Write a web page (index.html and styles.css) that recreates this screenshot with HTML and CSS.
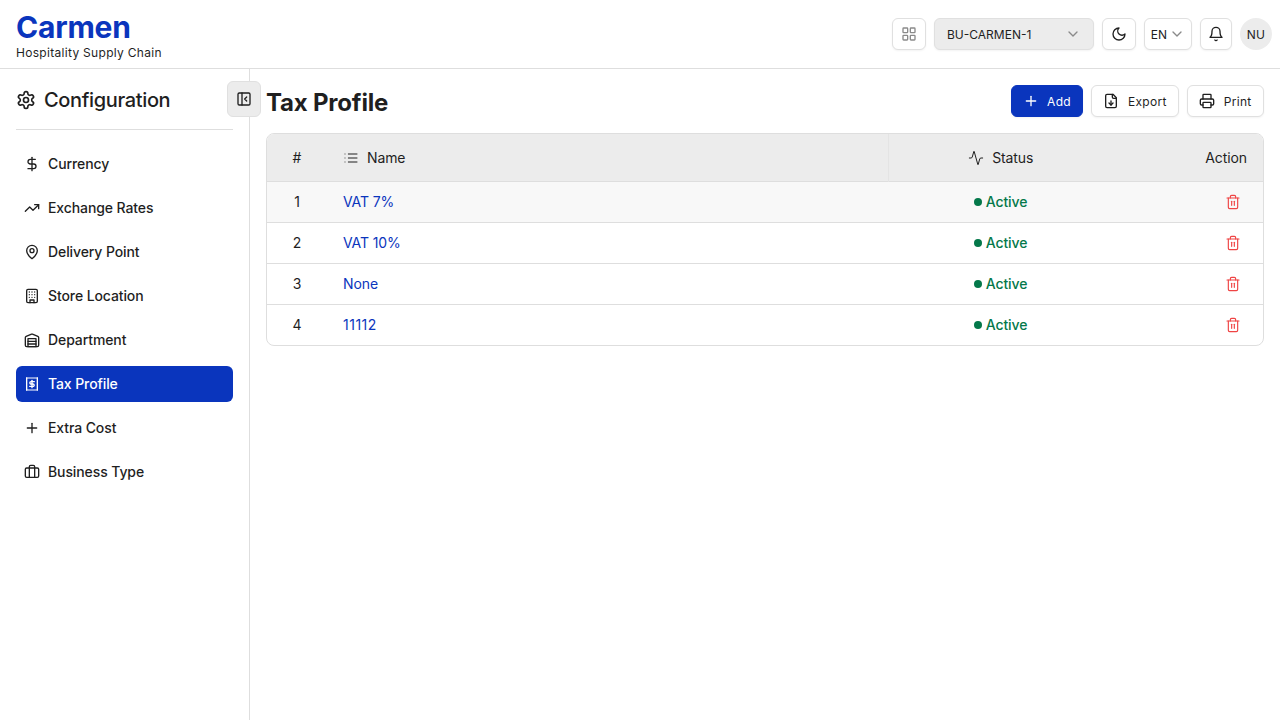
FILE: index.html
```html
<!DOCTYPE html>
<html lang="en">

<head>
    <meta charset="UTF-8">
    <meta name="viewport" content="width=device-width, initial-scale=1.0">
    <title>Tax Profile - Carmen</title>
    <link rel="stylesheet" href="styles.css">
</head>

<body>
    <svg class="sprite" aria-hidden="true">
        <symbol id="i-chevron" viewBox="0 0 24 24"><path d="m6 9 6 6 6-6"/></symbol>
        <symbol id="i-plus" viewBox="0 0 24 24"><path d="M5 12h14"/><path d="M12 5v14"/></symbol>
        <symbol id="i-trash" viewBox="0 0 24 24"><path d="M3 6h18"/><path d="M19 6v14c0 1-1 2-2 2H7c-1 0-2-1-2-2V6"/><path d="M8 6V4c0-1 1-2 2-2h4c1 0 2 1 2 2v2"/><path d="M10 11v6"/><path d="M14 11v6"/></symbol>
    </svg>

    <header class="topbar">
        <div class="brand">
            <div class="brand-name">Carmen</div>
            <div class="brand-sub">Hospitality Supply Chain</div>
        </div>
        <div class="top-actions">
            <button class="btn-box btn-grid" type="button">
                <svg class="icon muted" viewBox="0 0 24 24"><rect width="7" height="7" x="3" y="3" rx="1"/><rect width="7" height="7" x="14" y="3" rx="1"/><rect width="7" height="7" x="14" y="14" rx="1"/><rect width="7" height="7" x="3" y="14" rx="1"/></svg>
            </button>
            <button class="bu-select" type="button">
                <span>BU-CARMEN-1</span>
                <svg class="icon muted"><use href="#i-chevron"/></svg>
            </button>
            <button class="btn-box btn-moon" type="button">
                <svg class="icon" viewBox="0 0 24 24"><path d="M12 3a6 6 0 0 0 9 9 9 9 0 1 1-9-9Z"/></svg>
            </button>
            <button class="btn-box btn-lang" type="button">
                <span>EN</span>
                <svg class="icon muted"><use href="#i-chevron"/></svg>
            </button>
            <button class="btn-box btn-bell" type="button">
                <svg class="icon" viewBox="0 0 24 24"><path d="M6 8a6 6 0 0 1 12 0c0 7 3 9 3 9H3s3-2 3-9"/><path d="M10.3 21a1.94 1.94 0 0 0 3.4 0"/></svg>
            </button>
            <div class="avatar">NU</div>
        </div>
    </header>

    <div class="layout">
        <aside class="sidebar">
            <div class="side-title">
                <svg class="icon icon-lg" viewBox="0 0 24 24"><path d="M12.22 2h-.44a2 2 0 0 0-2 2v.18a2 2 0 0 1-1 1.73l-.43.25a2 2 0 0 1-2 0l-.15-.08a2 2 0 0 0-2.73.73l-.22.38a2 2 0 0 0 .73 2.73l.15.1a2 2 0 0 1 1 1.72v.51a2 2 0 0 1-1 1.74l-.15.09a2 2 0 0 0-.73 2.73l.22.38a2 2 0 0 0 2.73.73l.15-.08a2 2 0 0 1 2 0l.43.25a2 2 0 0 1 1 1.73V20a2 2 0 0 0 2 2h.44a2 2 0 0 0 2-2v-.18a2 2 0 0 1 1-1.73l.43-.25a2 2 0 0 1 2 0l.15.08a2 2 0 0 0 2.73-.73l.22-.39a2 2 0 0 0-.73-2.73l-.15-.08a2 2 0 0 1-1-1.74v-.5a2 2 0 0 1 1-1.74l.15-.09a2 2 0 0 0 .73-2.73l-.22-.38a2 2 0 0 0-2.73-.73l-.15.08a2 2 0 0 1-2 0l-.43-.25a2 2 0 0 1-1-1.73V4a2 2 0 0 0-2-2z"/><circle cx="12" cy="12" r="3"/></svg>
                <span>Configuration</span>
            </div>
            <button class="collapse-btn" type="button">
                <svg class="icon" viewBox="0 0 24 24"><rect width="18" height="18" x="3" y="3" rx="2"/><path d="M9 3v18"/><path d="m16 15-3-3 3-3"/></svg>
            </button>
            <nav class="side-nav">
                <a class="nav-item" href="#">
                    <svg class="icon" viewBox="0 0 24 24"><path d="M12 2v20"/><path d="M17 5H9.5a3.5 3.5 0 0 0 0 7h5a3.5 3.5 0 0 1 0 7H6"/></svg>
                    Currency
                </a>
                <a class="nav-item" href="#">
                    <svg class="icon" viewBox="0 0 24 24"><path d="M22 7 13.5 15.5 8.5 10.5 2 17"/><path d="M16 7h6v6"/></svg>
                    Exchange Rates
                </a>
                <a class="nav-item" href="#">
                    <svg class="icon" viewBox="0 0 24 24"><path d="M20 10c0 6-8 12-8 12s-8-6-8-12a8 8 0 0 1 16 0Z"/><circle cx="12" cy="10" r="3"/></svg>
                    Delivery Point
                </a>
                <a class="nav-item" href="#">
                    <svg class="icon" viewBox="0 0 24 24"><rect width="16" height="20" x="4" y="2" rx="2"/><path d="M9 22v-4h6v4"/><path d="M8 6h.01"/><path d="M16 6h.01"/><path d="M12 6h.01"/><path d="M12 10h.01"/><path d="M12 14h.01"/><path d="M16 10h.01"/><path d="M16 14h.01"/><path d="M8 10h.01"/><path d="M8 14h.01"/></svg>
                    Store Location
                </a>
                <a class="nav-item" href="#">
                    <svg class="icon" viewBox="0 0 24 24"><path d="M22 8.35V20a2 2 0 0 1-2 2H4a2 2 0 0 1-2-2V8.35A2 2 0 0 1 3.26 6.5l8-3.2a2 2 0 0 1 1.48 0l8 3.2A2 2 0 0 1 22 8.35Z"/><path d="M6 18h12"/><path d="M6 14h12"/><rect width="12" height="12" x="6" y="10"/></svg>
                    Department
                </a>
                <a class="nav-item active" href="#">
                    <svg class="icon" viewBox="0 0 24 24"><path d="M3.5 3h17M3.5 21h17" stroke-linecap="butt" stroke-dasharray="2 1"/><path d="M4 3v18M20 3v18"/><path d="M15.5 8.5h-5a1.75 1.75 0 0 0 0 3.5h3a1.75 1.75 0 0 1 0 3.5h-5"/><path d="M12 6.5v11"/></svg>
                    Tax Profile
                </a>
                <a class="nav-item" href="#">
                    <svg class="icon"><use href="#i-plus"/></svg>
                    Extra Cost
                </a>
                <a class="nav-item" href="#">
                    <svg class="icon" viewBox="0 0 24 24"><path d="M16 20V4a2 2 0 0 0-2-2h-4a2 2 0 0 0-2 2v16"/><rect width="20" height="14" x="2" y="6" rx="2"/></svg>
                    Business Type
                </a>
            </nav>
        </aside>

        <main class="content">
            <div class="page-head">
                <h1>Tax Profile</h1>
                <div class="page-actions">
                    <button class="btn btn-primary" type="button">
                        <svg class="icon"><use href="#i-plus"/></svg>
                        Add
                    </button>
                    <button class="btn" type="button">
                        <svg class="icon" viewBox="0 0 24 24"><path d="M15 2H6a2 2 0 0 0-2 2v16a2 2 0 0 0 2 2h12a2 2 0 0 0 2-2V7Z"/><path d="M14 2v4a2 2 0 0 0 2 2h4"/><path d="M12 18v-6"/><path d="m9 15 3 3 3-3"/></svg>
                        Export
                    </button>
                    <button class="btn" type="button">
                        <svg class="icon" viewBox="0 0 24 24"><path d="M6 18H4a2 2 0 0 1-2-2v-5a2 2 0 0 1 2-2h16a2 2 0 0 1 2 2v5a2 2 0 0 1-2 2h-2"/><path d="M6 9V3a1 1 0 0 1 1-1h10a1 1 0 0 1 1 1v6"/><rect x="6" y="14" width="12" height="8" rx="1"/></svg>
                        Print
                    </button>
                </div>
            </div>

            <div class="table-wrap">
                <table class="data-table">
                    <thead>
                        <tr>
                            <th class="col-num">#</th>
                            <th class="col-name">
                                <span class="th-label">
                                    <svg class="icon" viewBox="0 0 24 24"><path d="M3 12h.01"/><path d="M3 18h.01"/><path d="M3 6h.01"/><path d="M8 12h13"/><path d="M8 18h13"/><path d="M8 6h13"/></svg>
                                    Name
                                </span>
                            </th>
                            <th class="col-status">
                                <span class="th-label">
                                    <svg class="icon" viewBox="0 0 24 24"><path d="M22 12h-2.48a2 2 0 0 0-1.93 1.46l-2.35 8.36a.25.25 0 0 1-.48 0L9.24 2.18a.25.25 0 0 0-.48 0l-2.35 8.36A2 2 0 0 1 4.49 12H2"/></svg>
                                    Status
                                </span>
                            </th>
                            <th class="col-action">Action</th>
                        </tr>
                    </thead>
                    <tbody>
                        <tr class="row-hover">
                            <td class="col-num">1</td>
                            <td><a class="row-link" href="#">VAT 7%</a></td>
                            <td class="col-status"><span class="status"><i class="dot"></i>Active</span></td>
                            <td class="col-action"><svg class="icon trash"><use href="#i-trash"/></svg></td>
                        </tr>
                        <tr>
                            <td class="col-num">2</td>
                            <td><a class="row-link" href="#">VAT 10%</a></td>
                            <td class="col-status"><span class="status"><i class="dot"></i>Active</span></td>
                            <td class="col-action"><svg class="icon trash"><use href="#i-trash"/></svg></td>
                        </tr>
                        <tr>
                            <td class="col-num">3</td>
                            <td><a class="row-link" href="#">None</a></td>
                            <td class="col-status"><span class="status"><i class="dot"></i>Active</span></td>
                            <td class="col-action"><svg class="icon trash"><use href="#i-trash"/></svg></td>
                        </tr>
                        <tr>
                            <td class="col-num">4</td>
                            <td><a class="row-link row-code" href="#">11112</a></td>
                            <td class="col-status"><span class="status"><i class="dot"></i>Active</span></td>
                            <td class="col-action"><svg class="icon trash"><use href="#i-trash"/></svg></td>
                        </tr>
                    </tbody>
                </table>
            </div>
        </main>
    </div>
</body>

</html>
```

FILE: styles.css
```css
* {
    box-sizing: border-box;
}

body {
    font-family: Inter, "Liberation Sans", sans-serif;
    background-color: #fff;
    color: #1f1f1f;
    margin: 0;
    height: 100vh;
    display: flex;
    flex-direction: column;
    overflow: hidden;
}

button {
    font-family: inherit;
    color: inherit;
    cursor: pointer;
}

a {
    color: inherit;
    text-decoration: none;
}

.sprite {
    display: none;
}

.icon {
    width: 16px;
    height: 16px;
    flex-shrink: 0;
    fill: none;
    stroke: currentColor;
    stroke-width: 2;
    stroke-linecap: round;
    stroke-linejoin: round;
}

.icon-lg {
    width: 20px;
    height: 20px;
}

.muted {
    color: #8a8a8a;
}

/* top bar */
.topbar {
    height: 69px;
    flex-shrink: 0;
    display: flex;
    justify-content: space-between;
    align-items: center;
    padding: 0 8px 0 16px;
    border-bottom: 1px solid #dedede;
}

.brand {
    padding-top: 2px;
}

.brand-name {
    font-size: 30px;
    line-height: 36px;
    font-weight: 700;
    letter-spacing: -0.2px;
    color: #0a35bd;
}

.brand-sub {
    font-size: 12px;
    line-height: 16px;
    letter-spacing: 0.3px;
}

.top-actions {
    display: flex;
    align-items: center;
    gap: 8px;
}

.btn-box {
    height: 32px;
    display: flex;
    align-items: center;
    justify-content: center;
    gap: 2px;
    padding: 0;
    background: #fff;
    border: 1px solid #e0e0e0;
    border-radius: 6px;
    box-shadow: 0 1px 2px rgba(0, 0, 0, 0.05);
    font-size: 12px;
}

.btn-grid,
.btn-moon {
    width: 34px;
}

.btn-lang {
    width: 48px;
}

.btn-bell {
    width: 32px;
}

.bu-select {
    width: 160px;
    height: 32px;
    display: flex;
    align-items: center;
    justify-content: space-between;
    padding: 0 12px;
    background: #ececec;
    border: 1px solid #e0e0e0;
    border-radius: 6px;
    box-shadow: 0 1px 2px rgba(0, 0, 0, 0.05);
    font-size: 12px;
}

.avatar {
    width: 32px;
    height: 32px;
    display: flex;
    align-items: center;
    justify-content: center;
    border-radius: 50%;
    background: #ececec;
    font-size: 12px;
    font-weight: 400;
    letter-spacing: 0.3px;
}

/* page layout */
.layout {
    flex: 1;
    display: flex;
    min-height: 0;
}

.sidebar {
    position: relative;
    width: 250px;
    flex-shrink: 0;
    padding: 12px 16px;
    border-right: 1px solid #dedede;
}

.side-title {
    height: 49px;
    display: flex;
    align-items: center;
    gap: 8px;
    padding-bottom: 10px;
    border-bottom: 1px solid #dedede;
    margin-bottom: 16px;
    font-size: 20px;
    font-weight: 500;
    letter-spacing: -0.35px;
}

.collapse-btn {
    position: absolute;
    top: 12px;
    left: 227px;
    width: 34px;
    height: 36px;
    display: flex;
    align-items: center;
    justify-content: center;
    padding: 0;
    background: #ececec;
    border: 1px solid #e0e0e0;
    border-radius: 6px;
}

.side-nav {
    display: flex;
    flex-direction: column;
    gap: 8px;
}

.nav-item {
    height: 36px;
    display: flex;
    align-items: center;
    gap: 8px;
    padding: 0 8px 1px;
    border-radius: 6px;
    font-size: 14px;
    font-weight: 500;
    letter-spacing: -0.1px;
}

.nav-item.active {
    background: #0a35bd;
    color: #fff;
}

/* main content */
.content {
    flex: 1;
    min-width: 0;
    padding: 16px;
}

.page-head {
    display: flex;
    justify-content: space-between;
    align-items: center;
    height: 32px;
    margin-bottom: 16px;
}

h1 {
    margin: 0;
    padding-top: 2px;
    font-size: 24px;
    font-weight: 700;
    letter-spacing: -0.2px;
}

.page-actions {
    display: flex;
    gap: 8px;
}

.btn {
    height: 32px;
    display: flex;
    align-items: center;
    gap: 8.5px;
    padding: 0 11.5px 0 11px;
    background: #fff;
    border: 1px solid #e0e0e0;
    border-radius: 6px;
    box-shadow: 0 1px 2px rgba(0, 0, 0, 0.05);
    font-size: 12px;
    font-weight: 400;
    letter-spacing: 0.3px;
}

.btn-primary {
    background: #0a35bd;
    border-color: #0a35bd;
    color: #fff;
}

.table-wrap {
    border: 1px solid #dedede;
    border-radius: 8px;
    overflow: hidden;
}

.data-table {
    width: 100%;
    border-collapse: collapse;
    table-layout: fixed;
    font-size: 14px;
    letter-spacing: -0.1px;
}

.data-table th {
    height: 47px;
    padding: 1px 0 0;
    background: #ececec;
    font-weight: 400;
    text-align: left;
}

.data-table td {
    height: 41px;
    border-top: 1px solid #dedede;
    padding: 0;
}

.col-num {
    width: 60px;
    text-align: center !important;
}

.data-table th.col-name {
    width: 561px;
    padding-left: 16px;
    border-right: 1px solid #e4e4e4;
}

.data-table td:nth-child(2) {
    padding-left: 16px;
}

.col-status {
    width: 225px;
    text-align: center !important;
}

.col-action {
    text-align: right !important;
    padding-right: 16px !important;
}

.th-label {
    display: flex;
    align-items: center;
    gap: 8px;
}

.th-label .icon {
    stroke-width: 1.5;
}

.col-status .th-label {
    justify-content: center;
}

.row-hover td {
    background: #f8f8f8;
}

.row-link {
    color: #0a35bd;
}

.row-code {
    letter-spacing: 0.5px;
}

.status {
    display: flex;
    justify-content: center;
    align-items: center;
    gap: 4px;
    color: #04784a;
    font-weight: 500;
}

.dot {
    width: 8px;
    height: 8px;
    border-radius: 50%;
    background: #04784a;
}

.trash {
    display: block;
    margin: 0 6px 0 auto;
    color: #ef4444;
    stroke-width: 1.75;
}
```
